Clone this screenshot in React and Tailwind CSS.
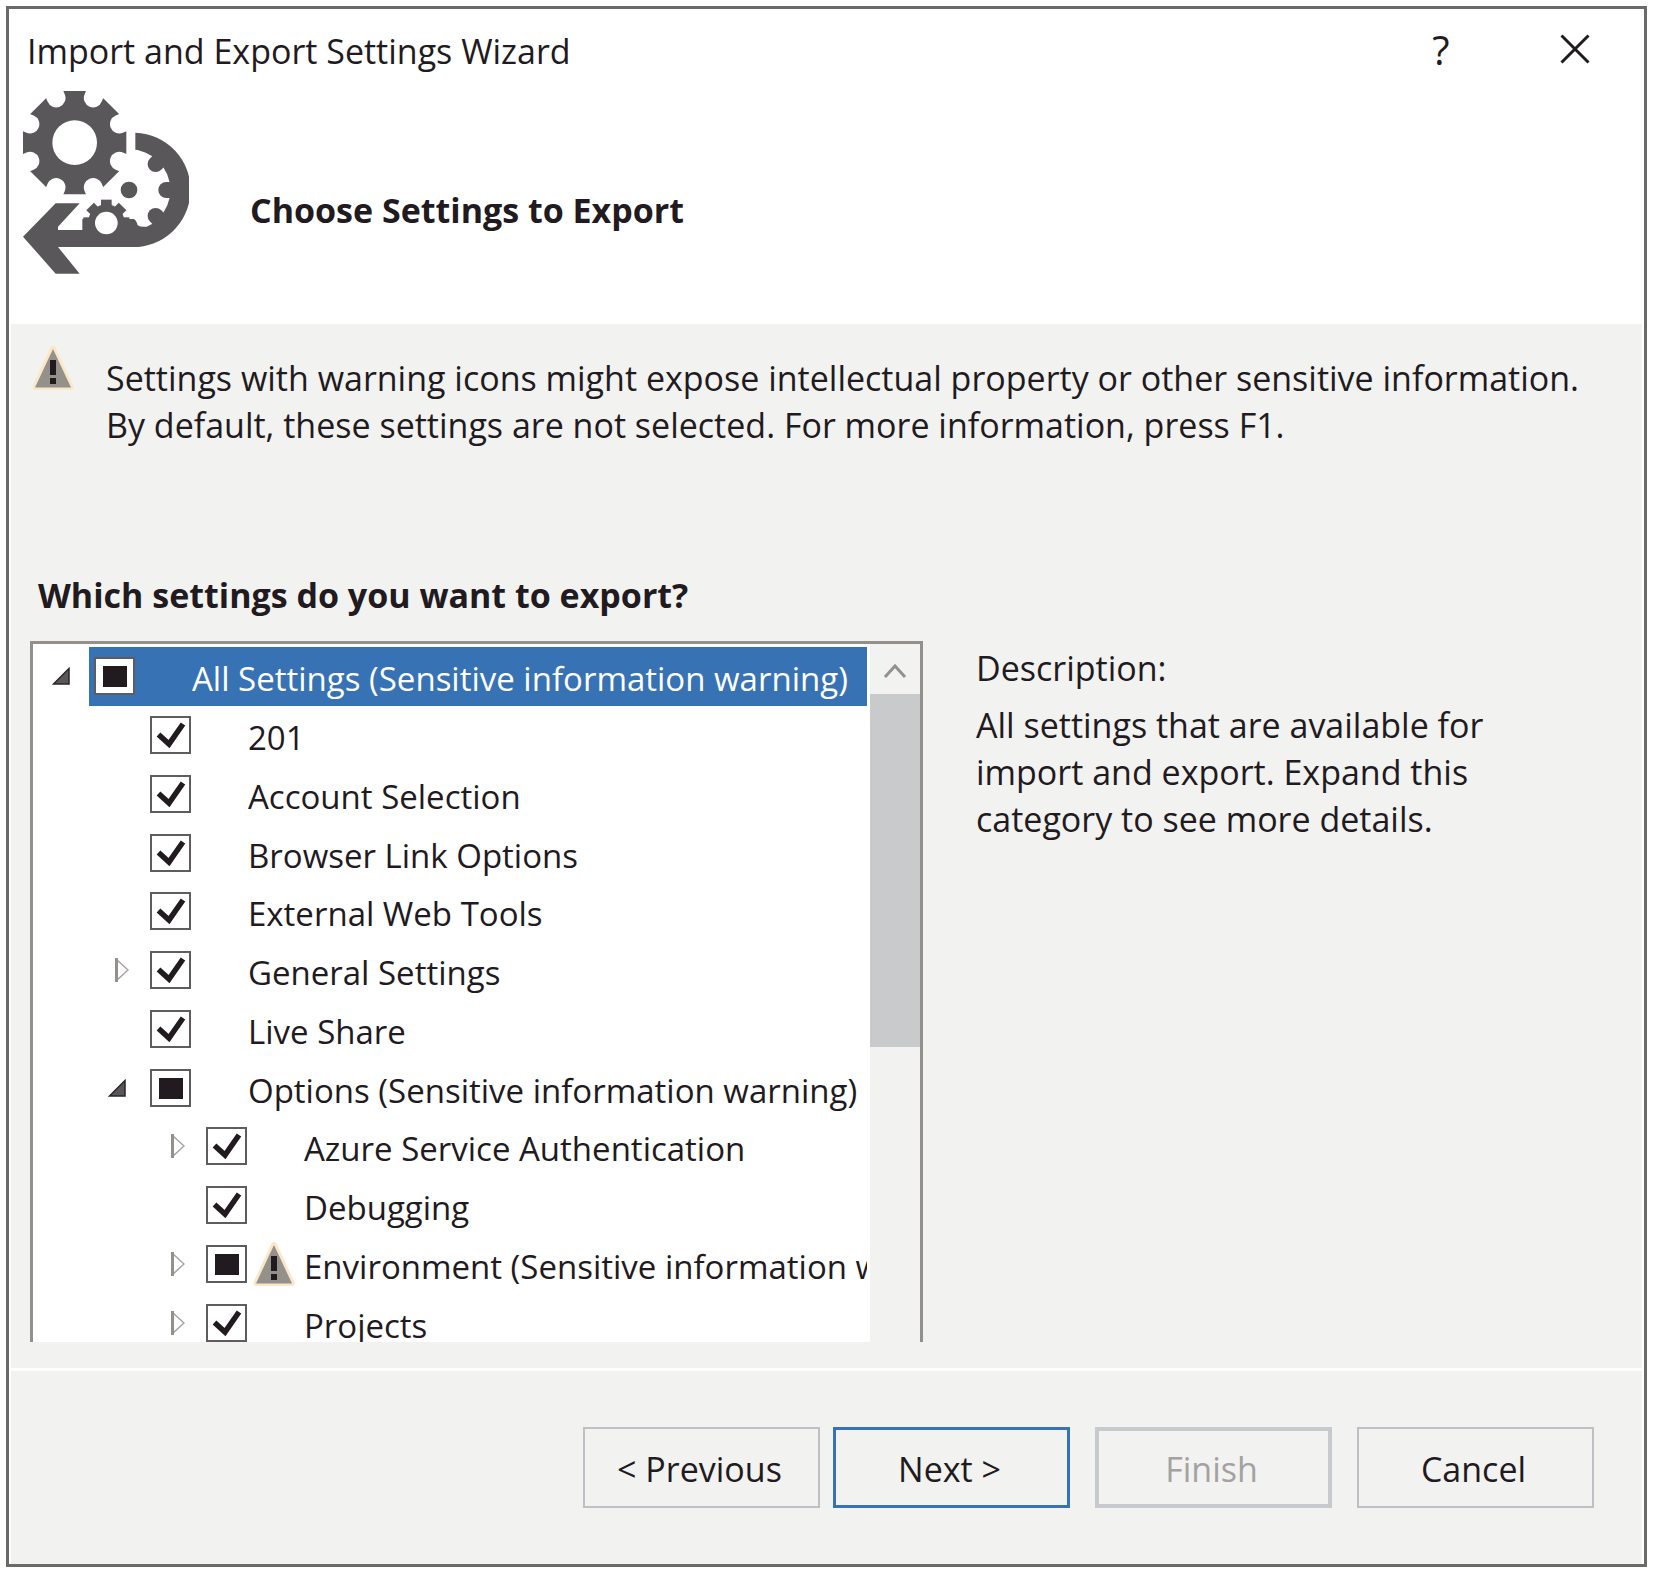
import React, { useState } from "react";

const rows = [
  { label: "All Settings (Sensitive information warning)", level: 0, state: "mixed", expander: "open", selected: true },
  { label: "201", level: 1, state: "on" },
  { label: "Account Selection", level: 1, state: "on" },
  { label: "Browser Link Options", level: 1, state: "on" },
  { label: "External Web Tools", level: 1, state: "on" },
  { label: "General Settings", level: 1, state: "on", expander: "closed" },
  { label: "Live Share", level: 1, state: "on" },
  { label: "Options (Sensitive information warning)", level: 1, state: "mixed", expander: "open" },
  { label: "Azure Service Authentication", level: 2, state: "on", expander: "closed" },
  { label: "Debugging", level: 2, state: "on" },
  { label: "Environment (Sensitive information warning)", level: 2, state: "mixed", expander: "closed", warning: true },
  { label: "Projects", level: 2, state: "on", expander: "closed" },
];

const indents = ["pl-3", "pl-[68px]", "pl-[124px]"];

function WizardIcon() {
  const eight = [0, 45, 90, 135, 180, 225, 270, 315];
  return (
    <svg viewBox="70 63 498 549" className="h-[183px] w-[166px] shrink-0" aria-hidden="true">
      <mask id="large-gear" maskUnits="userSpaceOnUse" x="60" y="50" width="340" height="340">
        <rect x="60" y="50" width="340" height="340" fill="#fff" />
        {eight.map((a) => (
          <path key={a} d="M225 73 V20" transform={`rotate(${a + 22.5} 225 218)`} stroke="#000" strokeWidth="56" strokeLinecap="round" />
        ))}
        <circle cx="225" cy="218" r="67" fill="#000" />
      </mask>
      <path d="M407 188 A171 171 0 0 1 395 531 H320 V188 Z" fill="#5a575a" />
      <circle cx="390" cy="360" r="122" fill="#fff" />
      <path d="M310 180 H407 V447 H310 Z" fill="#fff" />
      {[-45, 0, 45].map((a) => (
        <path key={a} d="M500 360 H520" transform={`rotate(${a} 390 360)`} stroke="#5a575a" strokeWidth="48" strokeLinecap="round" />
      ))}
      <path d="M395 531 H175 L240 611 H168 L70 500 L168 400 H240 L175 470 V480 H248 V447 H402 Q410 450 414 466 Q424 472 440 470 V500 Z" fill="#5a575a" />
      <circle cx="388" cy="360" r="25" fill="#5a575a" />
      <circle cx="320" cy="458" r="55" fill="#5a575a" />
      {eight.map((a) => (
        <rect key={a} x="304" y="389" width="32" height="40" transform={`rotate(${a} 320 458)`} fill="#5a575a" />
      ))}
      <circle cx="320" cy="459" r="34" fill="#fff" />
      <path mask="url(#large-gear)" d="M161 63 H289 L380 154 V282 L289 373 H161 L70 282 V154 Z" fill="#5a575a" />
    </svg>
  );
}

function WarningIcon() {
  return (
    <svg viewBox="0 0 42 46" className="h-[46px] w-[42px] shrink-0" role="img" aria-label="Warning">
      <path d="M21 4 L38.500 42 H3.500 Z" fill="#94918b" stroke="#fae7c8" strokeWidth="6" strokeLinejoin="round" />
      <path d="M21 4 L39 42.500 H3 Z" fill="#94918b" />
      <path d="M18 15 H24 V30 H18 Z M18 33 H24 V39 H18 Z" fill="#211a1e" />
    </svg>
  );
}

function Expander({ kind }) {
  if (!kind) return <span className="w-11 shrink-0" />;
  const open = kind === "open";
  return (
    <button type="button" aria-label={open ? "Collapse" : "Expand"} className={open ? "w-11 shrink-0 pl-[7px]" : "w-11 shrink-0 pl-[14px]"}>
      {open ? (
        <svg viewBox="0 0 18 18" className="size-[18px]" aria-hidden="true">
          <path d="M1.500 17 H17 V1.500 Z" fill="#5a575a" stroke="#2a2528" strokeWidth="1.500" />
        </svg>
      ) : (
        <svg viewBox="0 0 14 24" className="h-6 w-[14px]" aria-hidden="true">
          <path d="M1.500 1.500 V22.500 L13 12 Z" fill="#fff" stroke="#a5a39f" strokeWidth="1.500" />
          <path d="M1.500 0 V24" stroke="#94918b" strokeWidth="3" />
        </svg>
      )}
    </button>
  );
}

function TreeRow({ row, id }) {
  const [state, setState] = useState(row.state);
  return (
    <li className={`flex min-w-0 ${indents[row.level]}`}>
      <Expander kind={row.expander} />
      <span className={`flex min-w-0 flex-1 items-center overflow-hidden pl-[5px] ${row.selected ? "bg-[#3772b5] text-white" : ""}`}>
        <span className="grid shrink-0">
          <input
            id={id}
            type="checkbox"
            checked={state === "on"}
            ref={(el) => {
              if (el) el.indeterminate = state === "mixed";
            }}
            onChange={() => setState(state === "on" ? "off" : "on")}
            className="col-start-1 row-start-1 h-[38px] w-[41px] appearance-none border-2 border-[#5f5c5f] bg-white"
          />
          <svg viewBox="0 0 41 38" className="pointer-events-none col-start-1 row-start-1 h-[38px] w-[41px]" aria-hidden="true">
            {state === "on" && <path d="M8.500 18.500 L19 28 L33 8" fill="none" stroke="#211a1e" strokeWidth="5.500" />}
            {state === "mixed" && <path d="M9 9 H33 V30 H9 Z" fill="#211a1e" />}
          </svg>
        </span>
        <span className="flex w-[57px] shrink-0 pl-[6px]">{row.warning && <WarningIcon />}</span>
        <label htmlFor={id} className="whitespace-nowrap pt-[5px]">
          {row.label}
        </label>
      </span>
    </li>
  );
}

const buttonBase = "h-[81px] w-[237px] pt-[3px] pr-1 text-center";

export default function App() {
  return (
    <div className="flex min-h-screen bg-white p-[6px] pb-[7px] font-['Open_Sans','Noto_Sans',sans-serif] text-[34px] leading-[47px] text-[#211a1e]">
      <div className="flex flex-1 flex-col border-[3px] border-[#6b6a68] bg-white px-[2px]">
        <header className="h-[315px] shrink-0 pl-3">
          <div className="flex h-[82px] items-center pl-1">
            <h1 className="flex-1 pt-0.5">Import and Export Settings Wizard</h1>
            <button type="button" aria-label="Help" className="w-[60px] pb-0.5 text-[40px] font-medium">
              ?
            </button>
            <button type="button" aria-label="Close" className="mr-[34px] ml-[71px] flex h-[60px] w-[66px] items-center justify-center pb-0.5">
              <svg viewBox="0 0 30 30" className="size-[30px]" aria-hidden="true">
                <path d="M1.500 1.500 L28.500 28.500 M28.500 1.500 L1.500 28.500" stroke="#211a1e" strokeWidth="3" />
              </svg>
            </button>
          </div>
          <div className="flex items-center gap-[61px]">
            <WizardIcon />
            <h2 className="pt-14 font-bold">Choose Settings to Export</h2>
          </div>
        </header>

        <main className="flex-1 bg-[#f2f2f0] pr-12 pl-[19px]">
          <div className="flex gap-8 pt-[21px] pl-[2px]">
            <WarningIcon />
            <p className="pt-[10px]">
              Settings with warning icons might expose intellectual property or other sensitive information.
              <br />
              By default, these settings are not selected. For more information, press F1.
            </p>
          </div>

          <h3 className="mt-[123px] pl-2 font-bold">Which settings do you want to export?</h3>

          <div className="mt-[22px] flex">
            <div className="flex h-[701px] w-[893px] shrink-0 overflow-hidden border-[3px] border-b-0 border-[#93908b] bg-white">
              <ul className="mt-[3px] mr-[3px] grid h-[705px] min-w-0 flex-1 grid-rows-12 text-[33px]">
                {rows.map((row, i) => (
                  <TreeRow key={row.label} row={row} id={`setting-${i}`} />
                ))}
              </ul>
              <div className="flex w-[50px] shrink-0 flex-col bg-[#f2f2f0]">
                <button type="button" aria-label="Scroll up" className="flex h-[50px] items-center justify-center pt-1">
                  <svg viewBox="0 0 24 16" className="h-4 w-6" aria-hidden="true">
                    <path d="M2 14 L12 3 L22 14" fill="none" stroke="#94918b" strokeWidth="3" />
                  </svg>
                </button>
                <div className="h-[353px] bg-[#c9cacb]" />
              </div>
            </div>
            <section className="pt-1 pl-[53px]">
              <h4>Description:</h4>
              <p className="mt-[10px] max-w-[530px]">
                All settings that are available for import and export. Expand this category to see more details.
              </p>
            </section>
          </div>
        </main>

        <footer className="flex h-[196px] shrink-0 items-start justify-end border-t-[3px] border-white bg-[#f2f2f0] pt-14 pr-12">
          <button type="button" className={`${buttonBase} mr-[13px] border-2 border-[#bfc0c4]`}>
            &lt; Previous
          </button>
          <button type="button" className={`${buttonBase} mr-[25px] border-[3px] border-[#3772b5]`}>
            Next &gt;
          </button>
          <button type="button" disabled className={`${buttonBase} mr-[25px] border-4 border-[#c6cacf] text-[#a3a2a1]`}>
            Finish
          </button>
          <button type="button" className={`${buttonBase} border-2 border-[#bfc0c4]`}>
            Cancel
          </button>
        </footer>
      </div>
    </div>
  );
}
